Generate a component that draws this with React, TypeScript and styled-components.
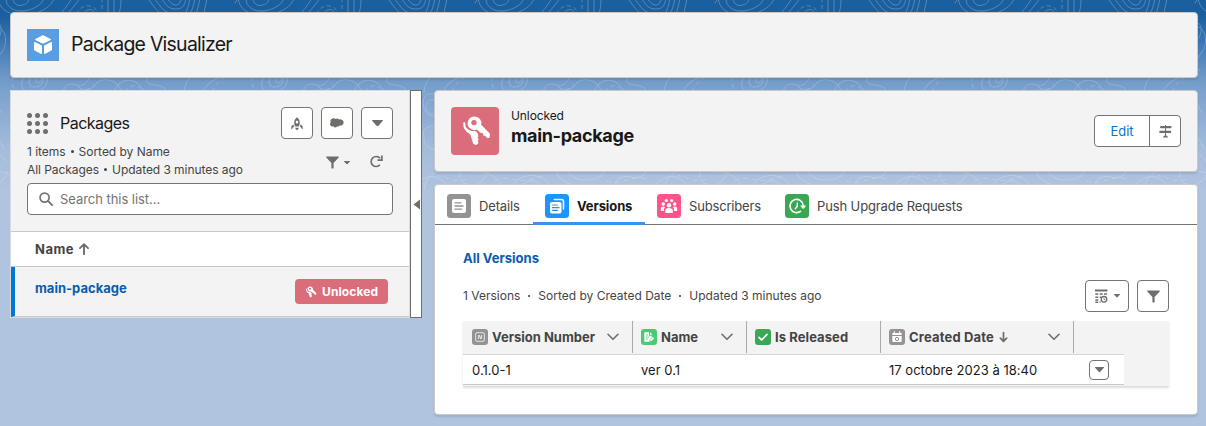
import React from 'react';
import styled, { createGlobalStyle } from 'styled-components';

const Global = createGlobalStyle`
  * { box-sizing: border-box; }
  html { background: #b0c4df; }
  body { margin: 0; font-family: Inter, "Liberation Sans", sans-serif; font-size: 13px; line-height: 18px; color: #181818; overflow: hidden; }
  button { font: inherit; padding: 0; margin: 0; }
  svg { display: block; flex: none; }
`;

const Page = styled.div`
  position: relative;
  height: 426px;
  padding: 12px 8px 0 10px;
  background: linear-gradient(to bottom, #1a5f9e 0, #195e9d 14px, #3a75b2 40px, #7099c8 78px, #7ba1cd 90px, #a5bcdc 150px, #b0c4df 195px);
`;

const Topography = styled.svg`
  position: absolute;
  inset: 0;
`;

const Content = styled.div`
  position: relative;
  display: flex;
  flex-direction: column;
  gap: 12px;
`;

const Card = styled.section<{ $h: number; $white?: boolean }>`
  height: ${p => p.$h}px;
  background: ${p => (p.$white ? '#fff' : '#f3f3f3')};
  border: 1px solid #c9c9c9;
  border-radius: 4px;
  box-shadow: 0 2px 2px rgba(0, 0, 0, 0.1);
`;

const AppHeader = styled(Card)`
  display: flex;
  align-items: center;
  gap: 12px;
  padding: 0 16px 1px;
`;

const AppTitle = styled.h1`
  margin: 0;
  font-size: 19.5px;
  line-height: 26px;
  font-weight: 400;
  letter-spacing: -0.76px;
  padding-bottom: 2px;
`;

const Columns = styled.div`
  display: flex;
  gap: 12px;
`;

const Split = styled.div`
  display: flex;
  width: 412px;
  height: 228px;
`;

const ListPanel = styled.section`
  width: 400px;
  background: #f3f3f3;
  border: 1px solid #d8dbe0;
`;

const Splitter = styled.div`
  width: 12px;
  background: #fff;
  border: 1px solid #706e6b;
  display: flex;
  align-items: center;
  justify-content: center;
`;

const ListHeader = styled.header`
  height: 141px;
  padding: 16px 16px 0 16px;
  border-bottom: 1px solid #c9c9c9;
`;

const TitleRow = styled.div`
  display: flex;
  align-items: center;
  height: 32px;
`;

const ListTitle = styled.h2`
  flex: 1;
  margin: 0 0 0 12px;
  font-size: 16px;
  font-weight: 400;
  letter-spacing: -0.52px;
`;

const ButtonRow = styled.div`
  display: flex;
  gap: 8px;
`;

const IconButton = styled.button<{ $w?: number; $h?: number }>`
  display: flex;
  align-items: center;
  justify-content: center;
  gap: 6px;
  width: ${p => p.$w ?? 32}px;
  height: ${p => p.$h ?? 32}px;
  background: #fff;
  border: 1px solid #747474;
  border-radius: 4px;
  color: #706e6b;
`;

const MetaRow = styled.div`
  display: flex;
  justify-content: space-between;
  margin-top: 4px;
`;

const Meta = styled.div<{ $ls?: number }>`
  font-size: 12px;
  line-height: 18px;
  letter-spacing: ${p => p.$ls ?? 0}px;
  color: #444;
  white-space: nowrap;
`;

const Bullet = styled.span`
  display: inline-block;
  width: 3px;
  height: 3px;
  margin: 0 5px 0 5px;
  vertical-align: 3px;
  border-radius: 50%;
  background: #444;
`;

const MetaTools = styled.div`
  display: flex;
  align-items: center;
  gap: 5px;
  padding: 3px 10px 0 0;
  color: #706e6b;
`;

const RefreshIcon = styled.svg`
  margin: 0 0 3px 15px;
`;

const SearchField = styled.div`
  display: flex;
  align-items: center;
  gap: 7px;
  height: 32px;
  margin-top: 4px;
  padding: 0 12px 0 11px;
  background: #fff;
  border: 1px solid #747474;
  border-radius: 4px;
  color: #747474;
  letter-spacing: -0.05px;
`;

const NameHead = styled.div`
  display: flex;
  align-items: center;
  gap: 5px;
  height: 35px;
  padding-left: 24px;
  background: #fff;
  border-bottom: 1px solid #c9c9c9;
  color: #444;
  font-weight: 700;
  letter-spacing: 0.5px;
`;

const PackageRow = styled.div`
  display: flex;
  justify-content: space-between;
  height: 50px;
  padding: 12px 21px 0 20px;
  border-left: 4px solid #0176d3;
  border-bottom: 1px solid #c9c9c9;
`;

const BoldLink = styled.a`
  display: block;
  color: #0b5cab;
  font-weight: 700;
  letter-spacing: 0;
  line-height: 19px;
`;

const Badge = styled.span`
  display: flex;
  align-items: center;
  gap: 5px;
  width: 93px;
  height: 25px;
  padding-left: 10px;
  border-radius: 4px;
  background: #db6c7a;
  color: #fff;
  font-size: 12px;
  font-weight: 700;
  letter-spacing: 0.1px;
`;

const Detail = styled.div`
  display: flex;
  flex-direction: column;
  gap: 12px;
  width: 764px;
`;

const RecordHeader = styled(Card)`
  display: flex;
  align-items: flex-start;
  padding: 16px;
`;

const RecordTitles = styled.div`
  flex: 1;
  margin-left: 12px;
`;

const RecordType = styled.div`
  font-size: 12px;
  line-height: 18px;
  letter-spacing: -0.1px;
`;

const RecordName = styled.h2`
  margin: 0;
  font-size: 18px;
  line-height: 22px;
  font-weight: 700;
  letter-spacing: -0.34px;
`;

const ActionGroup = styled.div`
  display: flex;
  width: 87px;
  height: 32px;
  margin-top: 8px;
  background: #fff;
  border: 1px solid #747474;
  border-radius: 4px;
  color: #706e6b;
`;

const EditButton = styled.button`
  width: 55px;
  border: 0;
  border-right: 1px solid #747474;
  background: none;
  color: #0176d3;
`;

const MenuButton = styled.button`
  display: flex;
  flex: 1;
  align-items: center;
  justify-content: center;
  border: 0;
  background: none;
  color: inherit;
`;

const TabBar = styled.nav`
  display: flex;
  height: 40px;
  border-bottom: 1px solid #747474;
`;

const Tab = styled.a<{ $active?: boolean; $w: number; $ls: number }>`
  display: flex;
  align-items: center;
  gap: 8px;
  width: ${p => p.$w}px;
  height: 40px;
  padding: ${p => (p.$active ? '4px 12px 0' : '1px 12px 0')};
  border-bottom: ${p => (p.$active ? '3px solid #3c92f0' : '0')};
  color: ${p => (p.$active ? '#181818' : '#444')};
  font-weight: ${p => (p.$active ? 700 : 400)};
  letter-spacing: ${p => p.$ls}px;
  white-space: nowrap;
`;

const TabBody = styled.div`
  padding: 24px 28px 0;
`;

const ListToolbar = styled.div`
  display: flex;
  align-items: center;
  justify-content: space-between;
  height: 32px;
  margin-top: 12px;
`;

const Dot = styled.span`
  display: inline-block;
  width: 2px;
  height: 2px;
  margin: 0 8px;
  vertical-align: 3px;
  background: #54698d;
`;

const DataTable = styled.div`
  height: 65px;
  width: 706px;
  margin-top: 9px;
  background: #f3f3f3;
  box-shadow: 0 2px 2px rgba(0, 0, 0, 0.14);
`;

const HeadRow = styled.div`
  display: flex;
  width: 661px;
  height: 34px;
  border-bottom: 1px solid #d4d4d4;
`;

const HeadCell = styled.div<{ $w: number; $ls: number }>`
  display: flex;
  align-items: center;
  gap: 4px;
  width: ${p => p.$w}px;
  height: 32px;
  padding: 0 13px 0 8px;
  border-right: 1px solid #aaa;
  color: #444;
  font-weight: 700;
  letter-spacing: ${p => p.$ls}px;
  white-space: nowrap;

  &:first-child { padding-left: 9px; }
`;

const SortLabel = styled.span`
  display: flex;
  align-items: center;
  gap: 5px;
`;

const ChevronIcon = styled.svg`
  margin-left: auto;
`;

const DataRow = styled.div`
  display: flex;
  align-items: center;
  width: 661px;
  height: 30px;
  background: #fff;
  border-bottom: 1px solid #c9c9c9;
`;

const Cell = styled.div<{ $w: number }>`
  width: ${p => p.$w}px;
  padding-left: 9px;
  letter-spacing: 0.02px;
`;

const Down = ({ w = 10 }: { w?: number }) => (
  <svg width={w} height={w * 0.6} viewBox="0 0 10 6"><path d="M0.4 0h9.2c.4 0 .5.4.3.7L5.4 5.800a.5.5 0 0 1-.8 0L.1.7C-.1.4 0 0 .4 0z" fill="currentColor" /></svg>
);

const Funnel = () => (
  <svg width="13" height="13" viewBox="0 0 13 13"><path d="M.7.5h11.600c.6 0 .8.5.4 1L7.600 6.900v5c0 .3-.2.5-.5.5H5.900c-.3 0-.5-.2-.5-.5v-5L.3 1.500C-.1 1 .1.500.7.5z" fill="currentColor" /></svg>
);

const Chevron = () => (
  <ChevronIcon width="12" height="8" viewBox="0 0 12 8"><path d="M1 1.300l5 5 5-5" fill="none" stroke="#706e6b" strokeWidth="1.6" strokeLinecap="round" strokeLinejoin="round" /></ChevronIcon>
);

const Arrow = ({ down }: { down?: boolean }) => (
  <svg width={down ? 9 : 10} height="12" viewBox="0 0 10 12"><path d={down ? 'M5 1v10M1.500 7.300L5 10.900l3.500-3.600' : 'M5 11.500V1.500M1 5.200L5 1.200l4 4'} fill="none" stroke="#706e6b" strokeWidth="1.9" strokeLinecap="round" strokeLinejoin="round" /></svg>
);

const Keys = ({ size, viewBox = '0 0 48 48' }: { size: number; viewBox?: string }) => (
  <svg width={size} height={size} viewBox={viewBox}>
    <path fill="#fff" fillRule="evenodd" d="M23.700 9.500a6.700 6.700 0 0 1 6.500 8.300l8.100 8.200c.5.500.7 1 .6 1.600l-.2 2.400c0 .6-.4.900-1 .9l-2.300-.1-.9-1.900-2.100-.4-.5-2.200-2.300-.5-3.900-3.400a6.700 6.700 0 1 1-2-12.900zm-.7 3.400a2.700 2.700 0 1 0 0 5.400 2.700 2.700 0 0 0 0-5.400z" />
    <path fill="none" stroke="#fff" strokeWidth="2" strokeLinecap="round" d="M13.300 16.200c-.2 4.600 1.500 7.300 5.200 9" />
    <path fill="#fff" d="M15.200 20.500c1.800 2.500 4.300 3.600 7.700 3.600 1.500 0 3 .6 3.600 2.200l1 3-1 1.400 1.300 1.700-1.100 1.600.8 2-1.400 1.600c-.4.400-.9.500-1.400.3l-2-1c-.4-.2-.6-.4-.7-.9l-2.500-7.700c-.2-.8-.6-1.200-1.500-1.700-2.100-1.100-3.300-3.300-2.800-6.100z" />
  </svg>
);

const Tile = ({ bg, size, r, children }: { bg: string; size: number; r: number; children: React.ReactNode }) => (
  <svg width={size} height={size} viewBox="0 0 24 24"><rect width="24" height="24" rx={r} fill={bg} />{children}</svg>
);

const Background = () => (
  <Topography width="1206" height="240">
    <defs>
      <pattern id="topo" width="240" height="240" patternUnits="userSpaceOnUse" patternTransform="translate(-6 0)">
        <g fill="none" stroke="#fff" strokeWidth=".9">
          <path d="M12-2c0 8 6 13 15 13S48 6 50-2M19-2c0 5 4 9 10 7 4-1 6-4 6-7M4-2c1 9 8 17 24 17S58 7 60-2" />
          <path strokeDasharray="4 3" d="M82 14c5-7 9-9 14-8s7 5 9 9M108-2v16M3 0l-9 14" />
          <path d="M66 14C74 6 76 0 79-2M73 14C81 6 84 0 87-2M89 14c5-6 9-6 13 0M114-2v16M120-2v16M127-2c0 8-1 12-2 16M153-2c5 5 8 12 15 16M160-2c5 6 8 13 16 15M167-2c5 6 6 11 15 11s9-7 10-11M173-2c4 6 6 7 9 7s5-3 5-7M196-2c-1 7-3 12-5 16M201-2c-1 7-3 12-5 16M206-2c-1 7-3 12-4 16M213-2c-1 7-3 12-3 16M-2 28c9-12 12 3 6 11s-8 20 2 32M3 26c11 5 10 19 5 26s-8 12-5 20" />
          <path d="M30 76c-5 9-2 16 8 16s17-6 15-16M37 76c-4 7-1 12 5 11s8-5 7-11M43 78c-3 4 0 6 3 4s2-4 0-4M69 93c1-9 7-10 13-8s12-2 14-9M79 93c6-6 15 0 21-7 4-5 8-7 15-6 10 2 10 9 15 13M119 93c4-10 12-15 20-12 7 2 7 7 15 12M155 76c-4 4-3 8 5 9s12 2 12 8M190 93c1-9 3-13 8-17M229 76c-10 3-18 9-20 17" />
          <path strokeDasharray="5 3" d="M20 76c-5 8 0 15 7 17M84 87c6 4 12 3 16-2M130 92c8-9 14-8 20 0M218 92c3-8 8-12 15-16" />
          <path d="M193 94a13 13 0 1 0 18 19c5-10-2-20-18-19zM197 100a7 7 0 1 0 8 10c4-7-2-11-8-10zM190 137c-4-8 6-13 17-10v22c-11 2-18-3-17-12zM0 100c6 3 4 9 8 13M0 135c5 2 7 8 10 14M2 153c5 1 8 5 10 9M190 190c2-13 8-15 14-20" />
          <path d="M0 172c12-2 22 4 28 14M14 172c-5 9-5 8-13 14M38 186c9-14 30-14 39 0M48 186c5-7 14-7 19 0M82 172c3 7 12 13 24 14M94 172c4 5 9 8 18 8s16-3 18-8M140 186c2-8 10-11 17-9s12-1 15-5M181 186c7-11 22-13 31-2M226 172c-2 8 2 12 14 14" />
          <path strokeDasharray="5 4" d="M20 181c16-8 21 6 48-5M132 181c15 6 24-8 45-1M202 177c8-5 13 8 30 2" />
        </g>
      </pattern>
      <linearGradient id="fade" x1="0" y1="0" x2="0" y2="1"><stop offset="0" stopColor="#fff" stopOpacity=".3" /><stop offset=".4" stopColor="#fff" stopOpacity=".22" /><stop offset=".78" stopColor="#fff" stopOpacity=".24" /><stop offset="1" stopColor="#fff" stopOpacity="0" /></linearGradient>
      <mask id="topoMask"><rect width="1206" height="240" fill="url(#fade)" /></mask>
    </defs>
    <rect width="1206" height="240" fill="url(#topo)" mask="url(#topoMask)" />
  </Topography>
);

export default function App() {
  return (
    <>
      <Global />
      <Page>
        <Background />
        <Content>
          <AppHeader $h={66}>
            <svg width="32" height="32" viewBox="0 0 32 32">
              <rect width="32" height="32" fill="#5a9de0" />
              <path fill="#fff" d="M15.300 6.500a1.500 1.500 0 0 1 1.400 0l7 3.400c.4.200.4.800 0 1l-7 3.500a1.500 1.500 0 0 1-1.400 0l-7-3.500c-.4-.2-.4-.8 0-1zM7.900 13l6.500 3.300c.4.200.6.500.6 1v7c0 .5-.5.800-.9.600l-6-3.100c-.7-.4-1.100-.9-1.100-1.600v-6.600c0-.5.500-.8.900-.6zM24.100 13c.4-.2.900.1.900.6v6.600c0 .7-.4 1.200-1.100 1.600l-6 3.100c-.4.200-.9-.1-.9-.6v-7c0-.5.200-.8.600-1z" />
            </svg>
            <AppTitle>Package Visualizer</AppTitle>
          </AppHeader>
          <Columns>
            <Split>
              <ListPanel>
                <ListHeader>
                  <TitleRow>
                    <svg width="21" height="21" viewBox="0 0 21 21" fill="#706e6b">
                      {[2.5, 10.5, 18.5].map(y => [2.5, 10.5, 18.5].map(x => <circle key={`${x}-${y}`} cx={x} cy={y} r="2.5" />))}
                    </svg>
                    <ListTitle>Packages</ListTitle>
                    <ButtonRow>
                      <IconButton aria-label="Launch">
                        <svg width="12" height="13" viewBox="0 0 12 13" fill="currentColor"><path fillRule="evenodd" d="M6 .2c2 1.500 2.800 3.500 2.800 5.700 0 1.400-.5 2.700-1.100 3.600H4.300C3.700 8.600 3.200 7.300 3.200 5.900 3.200 3.700 4 1.700 6 .2zm0 3.300a1.300 1.500 0 1 0 0 3 1.300 1.500 0 0 0 0-3z" /><path d="M2.300 7.200L.8 8.800c-.4.400-.5.900-.5 1.500v1.500c0 .5.600.6.800.2l1-1.800 1-.5zM9.700 7.200l1.500 1.600c.4.400.5.900.5 1.500v1.500c0 .5-.6.600-.8.200l-1-1.800-1-.5zM4.300 10.700h3.400c0 1.100-.7 1.900-1.700 2.200-1-.3-1.700-1.100-1.700-2.200z" /></svg>
                      </IconButton>
                      <IconButton aria-label="Salesforce">
                        <svg width="14" height="10" viewBox="0 0 14 10"><path fill="currentColor" d="M5.800 1.100A2.500 2.500 0 0 1 9 1.500a2.700 2.700 0 0 1 2.100-.1 3.100 3.100 0 0 1 1.300 5.500c-.8.700-1.700.8-2.600.6-.5.9-1.500 1.200-2.500.8-.8 1.500-3.200 1.500-3.800-.1A2.400 2.400 0 0 1 .8 4.300 2.700 2.700 0 0 1 1.500.9C2.900-.2 4.900-.1 5.800 1.100z" /></svg>
                      </IconButton>
                      <IconButton aria-label="More"><Down w={11} /></IconButton>
                    </ButtonRow>
                  </TitleRow>
                  <MetaRow>
                    <div>
                      <Meta $ls={-0.03}>1 items<Bullet />Sorted by Name</Meta>
                      <Meta $ls={-0.06}>All Packages<Bullet />Updated 3 minutes ago</Meta>
                    </div>
                    <MetaTools>
                      <Funnel />
                      <Down w={6} />
                      <RefreshIcon width="13" height="13" viewBox="0 0 13 13"><path d="M9.900 9.800A5 5 0 1 1 10 3.300" fill="none" stroke="currentColor" strokeWidth="1.700" /><path d="M11.900.5v4.700H7.500" fill="none" stroke="currentColor" strokeWidth="1.700" /></RefreshIcon>
                    </MetaTools>
                  </MetaRow>
                  <SearchField>
                    <svg width="14" height="14" viewBox="0 0 13 13" fill="none" stroke="currentColor"><circle cx="5.200" cy="5.200" r="4.200" strokeWidth="1.600" /><path d="M8.300 8.300L12.200 12.200" strokeWidth="1.700" strokeLinecap="round" /></svg>
                    <span>Search this list...</span>
                  </SearchField>
                </ListHeader>
                <NameHead>Name <Arrow /></NameHead>
                <PackageRow>
                  <BoldLink>main-package</BoldLink>
                  <Badge><Keys size={12} viewBox="10.500 8.500 30 31" />Unlocked</Badge>
                </PackageRow>
              </ListPanel>
              <Splitter>
                <svg width="7" height="11" viewBox="0 0 7 11"><path d="M7 .5v10L.5 5.500z" fill="#706e6b" /></svg>
              </Splitter>
            </Split>
            <Detail>
              <RecordHeader $h={82}>
                <svg width="48" height="48" viewBox="0 0 48 48"><rect width="48" height="48" rx="4" fill="#db6c7a" /><Keys size={48} /></svg>
                <RecordTitles>
                  <RecordType>Unlocked</RecordType>
                  <RecordName>main-package</RecordName>
                </RecordTitles>
                <ActionGroup>
                  <EditButton>Edit</EditButton>
                  <MenuButton aria-label="Hierarchy">
                    <svg width="13" height="13" viewBox="0 0 13 13" fill="currentColor"><rect x="1" y="1" width="11.500" height="2.200" rx="1" /><rect x=".2" y="5.800" width="12" height="2.200" rx="1" /><path d="M6 0h1v10.300l1.800 1.500c.4.400.2.800-.3.800H4.500c-.5 0-.7-.4-.3-.8L6 10.300z" /></svg>
                  </MenuButton>
                </ActionGroup>
              </RecordHeader>
              <Card $h={231} $white>
                <TabBar>
                  <Tab $w={98} $ls={-0.15}>
                    <Tile bg="#939393" size={24} r={3.5}><rect x="5" y="5" width="14" height="14" rx="2" fill="#fff" /><path d="M8 8.800h6M8 12h8M8 15.200h6.500" stroke="#939393" strokeWidth="1.300" strokeLinecap="round" /></Tile>
                    Details
                  </Tab>
                  <Tab $w={112} $ls={-0.1} $active>
                    <Tile bg="#1b96ff" size={24} r={3.5}><path d="M9.300 5.500h7.200a2 2 0 0 1 2 2v7.500" fill="none" stroke="#fff" strokeWidth="1.500" strokeLinecap="round" /><rect x="5" y="8" width="11.500" height="11.500" rx="1.700" fill="#fff" /><path d="M7.500 11h5M7.500 13.700h6.500M7.500 16.400h5" stroke="#1b96ff" strokeWidth="1.200" strokeLinecap="round" /></Tile>
                    Versions
                  </Tab>
                  <Tab $w={128} $ls={-0.17}>
                    <Tile bg="#ff538a" size={24} r={3.5}><g fill="#fff"><circle cx="9.300" cy="6.500" r="1.600" /><circle cx="14.700" cy="6.500" r="1.600" /><circle cx="6.300" cy="10" r="1.700" /><circle cx="17.700" cy="10" r="1.700" /><path d="M3.800 17v-2.300c0-1.500 1-2.300 2.500-2.300.8 0 1.300.2 1.700.6-.7.800-1.100 1.700-1.100 4zM20.200 17v-2.300c0-1.500-1-2.300-2.500-2.300-.8 0-1.300.2-1.700.6.7.8 1.100 1.700 1.100 4z" /><circle cx="12" cy="11.200" r="2.200" /><path d="M8.200 18.400v-1.700c0-1.700 1.500-2.700 3.800-2.700s3.800 1 3.800 2.700v1.700c0 .4-.3.700-.7.700H8.900c-.4 0-.7-.3-.7-.7z" /></g></Tile>
                    Subscribers
                  </Tab>
                  <Tab $w={210} $ls={-0.12}>
                    <Tile bg="#3ba755" size={24} r={3.5}><path d="M15.500 17.300A6.600 6.600 0 1 1 18.200 11.500" fill="none" stroke="#fff" strokeWidth="1.600" strokeLinecap="round" /><path d="M15.800 11.600h4.600c.4 0 .5.300.3.600l-2.200 2.500c-.2.200-.5.200-.7 0l-2.200-2.500c-.3-.3-.2-.6.200-.6z" fill="#fff" /><path d="M12.300 9v3.300l-2 2.500" fill="none" stroke="#fff" strokeWidth="1.400" strokeLinecap="round" /></Tile>
                    Push Upgrade Requests
                  </Tab>
                </TabBar>
                <TabBody>
                  <BoldLink>All Versions</BoldLink>
                  <ListToolbar>
                    <Meta>1 Versions<Dot />Sorted by Created Date<Dot />Updated 3 minutes ago</Meta>
                    <ButtonRow>
                      <IconButton $w={44} aria-label="Columns">
                        <svg width="13" height="14" viewBox="0 0 13 14" fill="none" stroke="currentColor"><path d="M0 1.500h12.500" strokeWidth="2" /><path d="M.3 5h3M4.700 5h3M9 5h3M.3 8.200h3M4.700 8.200h1.500M.3 11h3M.3 13.300h3M4.700 13h1" strokeWidth="1.400" /><circle cx="9" cy="10.300" r="2.800" strokeWidth="1.300" /><path d="M9 8.800v1.700h1.200" strokeWidth=".8" /></svg>
                        <Down w={6} />
                      </IconButton>
                      <IconButton aria-label="Filter"><Funnel /></IconButton>
                    </ButtonRow>
                  </ListToolbar>
                  <DataTable>
                    <HeadRow>
                      <HeadCell $w={170} $ls={0}>
                        <Tile bg="#939393" size={16} r={4.5}><rect x="5.500" y="5.500" width="13" height="13" rx="2" fill="none" stroke="#fff" strokeWidth="1.300" strokeOpacity=".85" /><path d="M9.500 15l1-6 3 6 1-6" fill="none" stroke="#fff" strokeWidth="1.200" /></Tile>
                        Version Number<Chevron />
                      </HeadCell>
                      <HeadCell $w={114} $ls={0}>
                        <Tile bg="#4bca76" size={16} r={4.5}><path d="M6 5h6v5h4v3l-3 3v3H6a1 1 0 0 1-1-1V6a1 1 0 0 1 1-1zM13.500 5l3.500 3.500h-3.500z" fill="#fff" /><path d="M7.500 9h3M7.500 12h5M7.500 15h3" stroke="#4bca76" strokeWidth="1.200" /><path d="M14.300 17.500l4.500-4.500" stroke="#fff" strokeWidth="2.400" /></Tile>
                        Name<Chevron />
                      </HeadCell>
                      <HeadCell $w={134} $ls={0.08}>
                        <Tile bg="#3ba755" size={16} r={4.5}><path d="M6 12.500l4 4 8-8.500" fill="none" stroke="#fff" strokeWidth="2.500" strokeLinecap="round" strokeLinejoin="round" /></Tile>
                        Is Released
                      </HeadCell>
                      <HeadCell $w={193} $ls={0.17}>
                        <Tile bg="#939393" size={16} r={4.5}><path d="M8 4.500v2M16 4.500v2" stroke="#fff" strokeWidth="2" strokeLinecap="round" /><path d="M5 6h14v3H5zM5 10.500h14V18a1.500 1.500 0 0 1-1.500 1.500h-11A1.500 1.500 0 0 1 5 18z" fill="#fff" /><circle cx="12" cy="15" r="2.500" fill="none" stroke="#939393" strokeWidth="1.500" /></Tile>
                        <SortLabel>Created Date<Arrow down /></SortLabel><Chevron />
                      </HeadCell>
                    </HeadRow>
                    <DataRow>
                      <Cell $w={169}>0.1.0-1</Cell>
                      <Cell $w={248}>ver 0.1</Cell>
                      <Cell $w={209}>17 octobre 2023 à 18:40</Cell>
                      <IconButton $w={20} $h={20} aria-label="Row actions"><Down w={9} /></IconButton>
                    </DataRow>
                  </DataTable>
                </TabBody>
              </Card>
            </Detail>
          </Columns>
        </Content>
      </Page>
    </>
  );
}
